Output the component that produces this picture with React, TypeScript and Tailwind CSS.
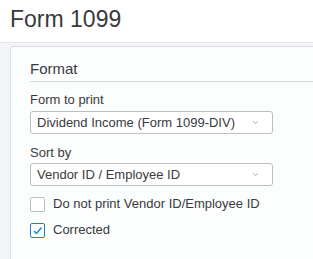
import { ChevronDown } from "lucide-react";

function Select({ value }: { value: string }) {
  return (
    <div className="flex h-[23px] w-[243px] items-center justify-between rounded-[3px] border border-[#babec5] bg-white pl-[6px] pr-[12px]">
      <span className="text-[13px] leading-[16px] text-[#393a3d]">{value}</span>
      <ChevronDown className="h-[9px] w-[9px] text-[#8d9096]" strokeWidth={2} />
    </div>
  );
}

function Checkbox({ label, checked }: { label: string; checked?: boolean }) {
  return (
    <label className="flex items-center gap-[8px]">
      <span
        className={
          checked
            ? "flex h-[15px] w-[15px] items-center justify-center rounded-[2px] border border-[#2a7ad0] bg-white"
            : "flex h-[15px] w-[15px] items-center justify-center rounded-[2px] border border-[#babec5] bg-white"
        }
      >
        {checked && (
          <svg width="11" height="11" viewBox="0 0 11 11" fill="none">
            <path d="M2 6 L4.5 8.5 L9.5 2.5" stroke="#2a7ad0" strokeWidth="1.4" />
          </svg>
        )}
      </span>
      <span className="text-[13px] leading-[16px] text-[#393a3d]">{label}</span>
    </label>
  );
}

export default function App() {
  return (
    <div
      className="flex h-[259px] w-[313px] flex-col overflow-hidden bg-white"
      style={{ fontFamily: "'Liberation Sans', Arial, sans-serif" }}
    >
      {/* Page header */}
      <div className="h-[43px] shrink-0 border-b border-[#e3e5e8] bg-white pl-[10px] pt-[4px]">
        <h1 className="text-[23px] leading-[30px] text-[#393a3d]">Form 1099</h1>
      </div>

      {/* Body */}
      <div className="flex-1 bg-[#f4f5f8] pl-[10px] pt-[3px]">
        <div className="h-full rounded-tl-[4px] border-l border-t border-[#dcdfe3] bg-[#fcfdfd] pl-[19px] pt-[13px]">
          <div className="border-b border-[#d4d7dc] pb-[3px] text-[15px] leading-[18px] text-[#393a3d]">
            Format
          </div>

          <div className="mt-[10px] text-[13px] leading-[16px] text-[#393a3d]">Form to print</div>
          <div className="mt-[3px]">
            <Select value="Dividend Income (Form 1099-DIV)" />
          </div>

          <div className="mt-[11px] text-[13px] leading-[16px] text-[#393a3d]">Sort by</div>
          <div className="mt-[2px]">
            <Select value="Vendor ID / Employee ID" />
          </div>

          <div className="mt-[10px] flex flex-col gap-[10px]">
            <Checkbox label="Do not print Vendor ID/Employee ID" />
            <Checkbox label="Corrected" checked />
          </div>
        </div>
      </div>
    </div>
  );
}
